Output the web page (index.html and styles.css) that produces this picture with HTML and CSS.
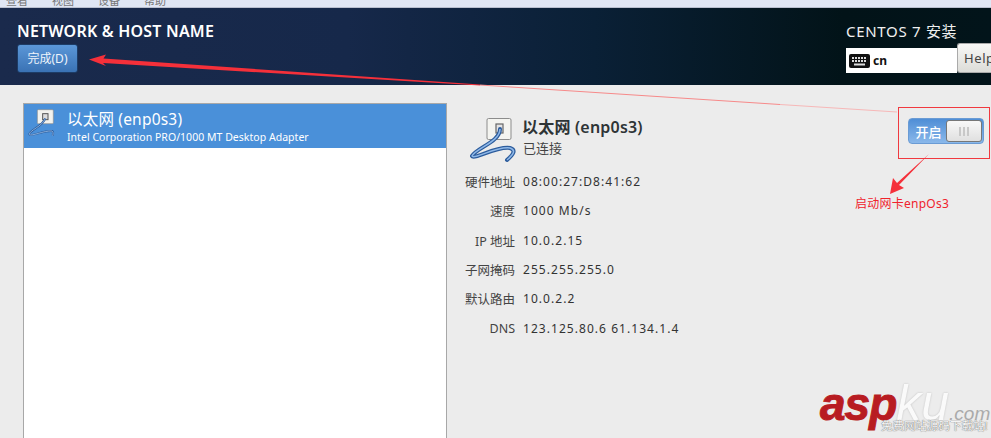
FILE: index.html
```html
<!DOCTYPE html>
<html lang="zh">
<head>
<meta charset="utf-8">
<title>Network &amp; Host Name</title>
<link rel="stylesheet" href="styles.css">
</head>
<body>
<div class="menu-strip"><span>查看</span><span>视图</span><span>设备</span><span>帮助</span></div>
<header class="topbar">
  <div class="top-left">
    <h1 class="title">NETWORK &amp; HOST NAME</h1>
    <button class="done">完成(D)</button>
  </div>
  <div class="top-right">
    <div class="product">CENTOS 7 安装</div>
    <div class="kb-row">
      <div class="kb">
        <svg class="kb-icon" width="21" height="14" viewBox="0 0 21 14"><rect width="21" height="14" rx="2" fill="#111"/><path d="M3 4h15M3 7h15" stroke="#ddd" stroke-width="2" stroke-dasharray="2 1"/><path d="M5 10.500h11" stroke="#ddd" stroke-width="2"/></svg>
        <span>cn</span>
      </div>
      <button class="help">Help!</button>
    </div>
  </div>
</header>
<main class="content">
  <section class="list">
    <div class="list-row">
      <svg class="net-icon small" width="32" height="32" viewBox="0 0 48 48">
        <rect x="14" y="1" width="24" height="21" rx="1.500" fill="#f2f2ee" stroke="#8c8c8c"/>
        <rect x="22" y="7" width="8" height="9" fill="#ddd" stroke="#555" stroke-width="1.500"/>
        <path d="M26 14C22 26 2 32 2 38C4 42 24 32 36 33C38 34 38 37 37 40" fill="none" stroke="#2c5c9c" stroke-width="3"/>
        <path d="M26 14C22 26 2 32 2 38C4 42 24 32 36 33C38 34 38 37 37 40" fill="none" stroke="#9cc0ea" stroke-width="1.200"/>
      </svg>
      <div class="row-text">
        <div class="row-name">以太网 (enp0s3)</div>
        <div class="row-sub">Intel Corporation PRO/1000 MT Desktop Adapter</div>
      </div>
    </div>
  </section>
  <section class="detail">
    <div class="detail-head">
      <svg class="net-icon" width="48" height="48" viewBox="0 0 48 48">
        <rect x="17" y="0.500" width="24" height="21" rx="1.500" fill="#f4f4f0" stroke="#8c8c8c"/>
        <rect x="26" y="6" width="7" height="9" fill="#e4e4e4" stroke="#666" stroke-width="1.200"/>
        <path d="M30 11C30 24 6 30 2 38C4 42 26 28 40 30C46 32 44 36 37 42" fill="none" stroke="#2c5c9c" stroke-width="4" stroke-linecap="round"/>
        <path d="M30 11C30 24 6 30 2 38C4 42 26 28 40 30C46 32 44 36 37 42" fill="none" stroke="#8fb8e8" stroke-width="1.500"/>
      </svg>
      <div class="head-text">
        <div class="dev-name">以太网 (enp0s3)</div>
        <div class="dev-state">已连接</div>
      </div>
      <div class="switch">
        <span class="switch-on">开启</span>
        <span class="switch-knob"><i></i><i></i><i></i></span>
      </div>
    </div>
    <dl class="props">
      <dt>硬件地址</dt><dd>08:00:27:D8:41:62</dd>
      <dt>速度</dt><dd>1000 Mb/s</dd>
      <dt>IP 地址</dt><dd>10.0.2.15</dd>
      <dt>子网掩码</dt><dd>255.255.255.0</dd>
      <dt>默认路由</dt><dd>10.0.2.2</dd>
      <dt>DNS</dt><dd>123.125.80.6 61.134.1.4</dd>
    </dl>
  </section>
</main>
<div class="note-box"></div>
<div class="note-text">启动网卡enpOs3</div>
<svg class="arrows" width="991" height="438" viewBox="0 0 991 438">
  <path d="M89 59.500L106 54.500L103.500 58.500L480 84.500L480 85.500L103 63L106 66Z" fill="#f5303a"/>
  <path d="M480 85L780 104.500" stroke="#f78a8a" stroke-width="1"/>
  <path d="M780 104.500L897 112" stroke="#f7b8b8" stroke-width="1"/>
  <path d="M929 154L899 185L904 188L890 194L893 178L897 183Z" fill="#f5303a"/>
</svg>
<div class="mark">
  <div class="mark-logo"><span class="mark-asp">asp</span><span class="mark-ku">ku</span><span class="mark-com">.com</span></div>
  <div class="mark-sub">免费网站源码下载站!</div>
</div>
</body>
</html>
```
FILE: styles.css
```css
* { box-sizing: border-box; }
html, body { margin: 0; padding: 0; }
body {
  width: 991px;
  height: 438px;
  overflow: hidden;
  position: relative;
  background: #ececec;
  color: #2e3436;
  font-family: "Noto Sans", "Noto Sans CJK SC", sans-serif;
}
.menu-strip {
  height: 8px;
  background: #e0e6f4;
  border-bottom: 1px solid #b9bfcf;
  overflow: hidden;
  padding-left: 6px;
  display: flex;
  gap: 24px;
  font-size: 11px;
  line-height: 1px;
  color: #777;
}
.topbar {
  height: 77px;
  background: linear-gradient(90deg, #1a2a4c 0%, #16284a 35%, #0a2036 60%, #021318 85%, #02141a 100%);
  display: flex;
  justify-content: space-between;
  color: #fff;
}
.top-left { padding: 14px 0 0 17px; }
.title {
  margin: 0;
  font-size: 16px;
  line-height: 18px;
  font-weight: 600;
  letter-spacing: 0.2px;
}
.done {
  display: block;
  margin-top: 4px;
  width: 61px;
  height: 29px;
  padding: 0;
  border: 1px solid #1d3c66;
  border-radius: 3px;
  background: linear-gradient(#5b97d8, #3a72b4);
  color: #eef4fb;
  font: 12px/27px "Noto Sans", "Noto Sans CJK SC", sans-serif;
}
.top-right { width: 145px; flex: none; padding-top: 14px; }
.product {
  font-size: 15px;
  line-height: 18px;
  color: #f0f0f0;
  letter-spacing: 0.7px;
}
.kb-row { display: flex; align-items: flex-start; }
.kb {
  flex: none;
  margin-top: 8px;
  width: 111px;
  height: 25px;
  background: #fff;
  display: flex;
  align-items: center;
  gap: 3px;
  padding-left: 3px;
  color: #111;
  font-size: 12px;
  font-weight: 700;
}
.help {
  flex: none;
  margin-top: 3px;
  width: 34px;
  height: 30px;
  padding: 0 0 0 6px;
  text-align: left;
  white-space: nowrap;
  overflow: hidden;
  border: 1px solid #aaa;
  border-right: 0;
  border-radius: 3px 0 0 3px;
  background: linear-gradient(#f8f8f6, #dcdcd8);
  color: #444;
  font: 13px "Noto Sans", sans-serif;
  letter-spacing: 0.6px;
}
.content { display: flex; height: 353px; }
.list {
  margin: 18px 0 0 23px;
  width: 424px;
  height: 340px;
  background: #fff;
  border: 1px solid #a8a8a8;
  flex: none;
}
.list-row {
  height: 44px;
  background: #4a90d9;
  color: #fff;
  display: flex;
  gap: 7px;
  padding: 5px 0 0 4px;
}
.net-icon.small { flex: none; }
.row-name { font-size: 15.500px; line-height: 20px; letter-spacing: 0.2px; }
.row-sub { font-size: 10.500px; line-height: 16px; letter-spacing: 0.03px; }
.detail { flex: 1; padding: 33px 7px 0 23px; }
.detail-head { display: flex; position: relative; height: 50px; }
.net-icon { flex: none; }
.head-text { margin-left: 5px; }
.dev-name { font-size: 16px; line-height: 18px; font-weight: 600; letter-spacing: 0.2px; margin-left: -1px; }
.dev-state { font-size: 13px; line-height: 17px; margin-top: 4px; color: #444; }
.switch {
  margin-left: auto;
  margin-top: 0;
  width: 76px;
  height: 26px;
  border: 1px solid #6a9bd4;
  border-radius: 4px;
  background: linear-gradient(#4f8ed6, #8ab8ea);
  display: flex;
  align-items: center;
  color: #fff;
  font-size: 13px;
  font-weight: 500;
}
.switch-on { width: 37px; text-align: center; padding-left: 2px; }
.switch-knob {
  width: 36px;
  height: 22px;
  border: 1px solid #777;
  border-radius: 3px;
  background: linear-gradient(#f8f8f8, #e0e0e0);
  display: flex;
  justify-content: center;
  align-items: center;
  gap: 2px;
}
.switch-knob i { width: 2px; height: 9px; background: #c8c8c8; }
.props {
  margin: 0;
  display: grid;
  grid-template-columns: 51px 1fr;
  column-gap: 8px;
  grid-auto-rows: 29.3px;
  align-items: center;
  margin-left: -6px;
  margin-top: -1px;
  font-size: 12.500px;
}
.props dt { text-align: right; color: #444; white-space: nowrap; }
.props dd { margin: 0; font-size: 12px; letter-spacing: 1.05px; color: #333; }
.note-box {
  position: absolute;
  left: 898px;
  top: 107px;
  width: 92px;
  height: 52px;
  border: 1px solid #f0393f;
}
.note-text {
  position: absolute;
  left: 855px;
  top: 195px;
  font-size: 12px;
  line-height: 17px;
  letter-spacing: 0.25px;
  color: #f0232c;
}
.arrows { position: absolute; left: 0; top: 0; pointer-events: none; }
.mark { position: absolute; left: 820px; top: 378px; width: 171px; }
.mark-logo {
  font-family: "Liberation Sans", sans-serif;
  font-style: italic;
  white-space: nowrap;
  line-height: 50px;
  height: 50px;
}
.mark-asp { font-size: 46px; font-weight: 700; color: #b81c22; letter-spacing: -1px; -webkit-text-stroke: 1px #b81c22; }
.mark-ku { font-size: 50px; color: #fafafa; text-shadow: 0 0 2px #bbb; }
.mark-com { font-size: 19px; color: #aaa; }
.mark-sub {
  position: absolute;
  left: 61px;
  top: 40px;
  font-size: 11.500px;
  line-height: 16px;
  white-space: nowrap;
  color: #f4f4f4;
  text-shadow: 0 0 1px #777, 0 0 1px #777;
}
```
